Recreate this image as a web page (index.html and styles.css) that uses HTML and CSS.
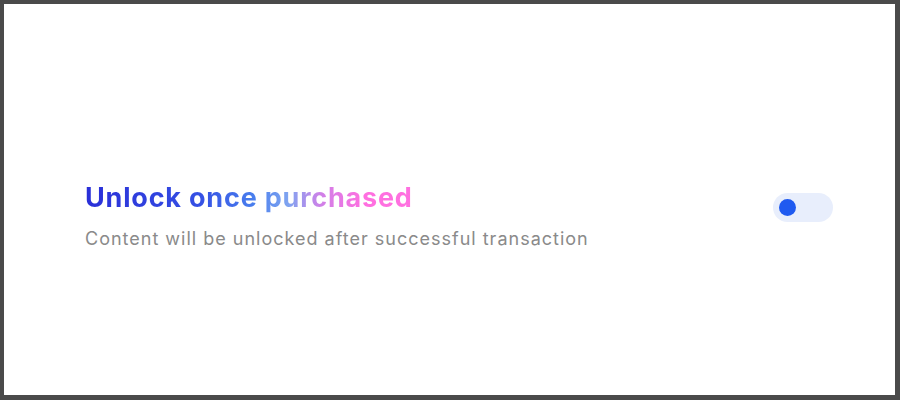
FILE: index.html
```html
<!DOCTYPE html>
<html>
<head>
<meta charset="utf-8">
<link rel="stylesheet" href="styles.css">
</head>
<body>
<div class="frame">
  <div class="row">
    <div class="text">
      <h1 class="title">Unlock once purchased</h1>
      <p class="sub">Content will be unlocked after successful transaction</p>
    </div>
    <button class="toggle" aria-label="toggle"><span class="knob"></span></button>
  </div>
</div>
</body>
</html>
```
FILE: styles.css
```css
html, body { margin: 0; padding: 0; }
body { width: 900px; height: 400px; background: #4a4a4a; font-family: "Inter", "Noto Sans", sans-serif; }
.frame {
  box-sizing: border-box;
  width: 900px; height: 400px;
  border-style: solid; border-color: #4a4a4a;
  border-width: 4px 5px 5px 4px;
  background: #fff;
  padding-top: 176px;
}
.row {
  display: flex; justify-content: space-between; align-items: flex-start;
  padding: 0 62px 0 81px;
}
.title {
  margin: 0;
  font-size: 27px; font-weight: 700; line-height: 36px;
  letter-spacing: 0.8px;
  background: linear-gradient(90deg, #2a2fd8 0%, #3550e4 35%, #4a80ee 52%, #80a4f0 62%, #d080e8 72%, #ff6fe0 85%, #ff70e0 100%);
  -webkit-background-clip: text; background-clip: text;
  color: transparent;
  display: inline-block;
}
.sub {
  margin: 11px 0 0;
  font-size: 18px; line-height: 24px; color: #8a8a8a; font-weight: 400;
  letter-spacing: 1px;
}
.toggle {
  margin-top: 13px;
  width: 60px; height: 29px; border-radius: 15px;
  border: none; background: #e8eefc; padding: 0 0 0 6px;
  display: flex; align-items: center;
}
.knob { width: 17px; height: 17px; border-radius: 50%; background: #1f5af0; display: block; }
```
